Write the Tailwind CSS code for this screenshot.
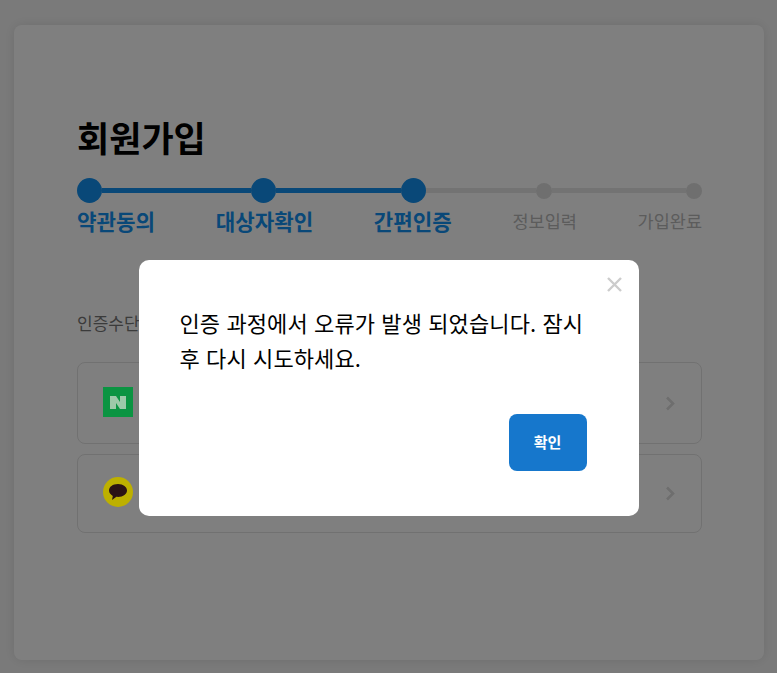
<!DOCTYPE html>
<html lang="ko">
<head>
  <meta charset="UTF-8" />
  <title>회원가입</title>
  <script src="https://cdn.jsdelivr.net/npm/@tailwindcss/browser@4"></script>
</head>
<body class="bg-[#f5f5f5] font-['Noto_Sans_CJK_KR',sans-serif] h-[673px] overflow-hidden">

  <!-- Signup card -->
  <div class="ml-[14px] mr-[13px] mt-[25px] h-[635px] bg-white rounded-lg shadow-[0_0_12px_rgba(0,0,0,0.1)] pl-[63px] pr-[62px] pt-[90px]">
    <h1 class="text-[35px] leading-[44px] font-bold text-black">회원가입</h1>

    <!-- Stepper -->
    <div class="mt-[19px] flex items-center h-[25px]">
      <span class="w-[25px] h-[25px] rounded-full bg-[#1290f0] shrink-0"></span>
      <span class="w-[149px] h-[5px] bg-[#1290f0]"></span>
      <span class="w-[25px] h-[25px] rounded-full bg-[#1290f0] shrink-0"></span>
      <span class="w-[125px] h-[5px] bg-[#1290f0]"></span>
      <span class="w-[25px] h-[25px] rounded-full bg-[#1290f0] shrink-0"></span>
      <span class="w-[110px] h-[5px] bg-[#e6e6e6]"></span>
      <span class="w-[16px] h-[16px] rounded-full bg-[#dedede] shrink-0"></span>
      <span class="w-[134px] h-[5px] bg-[#e6e6e6]"></span>
      <span class="w-[16px] h-[16px] rounded-full bg-[#dedede] shrink-0"></span>
    </div>
    <div class="mt-[3px] flex justify-between items-center h-[30px]">
      <span class="text-[21.2px] font-bold text-[#1290f0]">약관동의</span>
      <span class="text-[21.2px] font-bold text-[#1290f0]">대상자확인</span>
      <span class="text-[21.2px] font-bold text-[#1290f0]">간편인증</span>
      <span class="text-[17.5px] text-[#b8b8b8]">정보입력</span>
      <span class="text-[17.5px] text-[#b8b8b8]">가입완료</span>
    </div>

    <!-- Auth methods -->
    <p class="mt-[75px] text-[17px] leading-6 text-[#777]">인증수단</p>
    <div class="mt-[27px] flex flex-col gap-[10px]">
      <div class="h-[82px] border border-[#e2e2e2] rounded-lg flex items-center justify-between pl-[25px] pr-[26px]">
        <span class="relative z-20 mb-[2px] w-[30px] h-[30px] bg-[#0b9442] flex items-center justify-center">
          <svg viewBox="0 0 16 13" class="w-[16px] h-[13px]"><path d="M0 0h6l4 6V0h6v13h-6L6 7v6H0z" fill="#9dc9a9"/></svg>
        </span>
        <svg viewBox="0 0 10 15" class="w-[10px] h-[15px]" fill="none" stroke="#dcdcdc" stroke-width="2.6"><path d="M2 1.5l6 6-6 6"/></svg>
      </div>
      <div class="h-[79px] border border-[#e2e2e2] rounded-lg flex items-center justify-between pl-[25px] pr-[26px]">
        <span class="relative z-20 mb-[3px] w-[30px] h-[30px] rounded-full bg-[#bdb000] flex items-center justify-center">
          <svg viewBox="0 0 20 18" class="w-[20px] h-[18px]"><path d="M10 1C4.7 1 1 3.9 1 7.5c0 2.3 1.5 4.2 3.8 5.4L4 17l4.4-3.2c.5.1 1 .1 1.6.1 5.3 0 9-2.9 9-6.4S15.3 1 10 1z" fill="#2a1215"/></svg>
        </span>
        <svg viewBox="0 0 10 15" class="w-[10px] h-[15px]" fill="none" stroke="#dcdcdc" stroke-width="2.6"><path d="M2 1.5l6 6-6 6"/></svg>
      </div>
    </div>
  </div>

  <!-- Error modal -->
  <div class="fixed inset-0 z-10 bg-black/50 flex justify-center items-start pt-[260px]">
    <div class="relative w-[500px] h-[256px] bg-white rounded-[10px] pl-[41px] pr-[52px] pt-[45px]">
      <button class="absolute top-[17px] right-[17px] w-[15px] h-[15px]">
        <svg viewBox="0 0 15 15" class="w-[15px] h-[15px]" fill="none" stroke="#ccc" stroke-width="2.4"><path d="M1 1l13 13M14 1L1 14"/></svg>
      </button>
      <p class="text-[22px] leading-[35px] tracking-[0.1px] text-black">인증 과정에서 오류가 발생 되었습니다. 잠시 후 다시 시도하세요.</p>
      <button class="absolute left-[370px] top-[154px] w-[78px] h-[57px] bg-[#1677cc] rounded-lg text-white text-[15px] font-bold">확인</button>
    </div>
  </div>

</body>
</html>
